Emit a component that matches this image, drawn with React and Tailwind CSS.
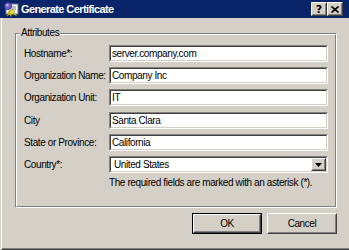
import React from "react";

function Sunken({ children, className = "" }) {
  return (
    <div className={"h-[17px] border border-t-[#808080] border-l-[#808080] border-b-white border-r-white " + className}>
      <div className="h-full border border-t-[#404040] border-l-[#404040] border-b-[#d4d0c8] border-r-[#d4d0c8] bg-white flex items-center">
        {children}
      </div>
    </div>
  );
}

function Raised({ children, className = "" }) {
  return (
    <div className={"border border-t-white border-l-white border-b-[#404040] border-r-[#404040] " + className}>
      <div className="w-full h-full border border-t-[#d4d0c8] border-l-[#d4d0c8] border-b-[#808080] border-r-[#808080] bg-[#d4d0c8] flex items-center justify-center">
        {children}
      </div>
    </div>
  );
}

function CertIcon() {
  return (
    <svg width="16" height="16" viewBox="0 0 16 16" className="shrink-0">
      <rect x="3" y="3" width="12" height="10" fill="#f4f4f4" stroke="#7a7a7a" strokeWidth="1" />
      <line x1="8" y1="6" x2="13" y2="6" stroke="#8a8a8a" />
      <line x1="8" y1="8" x2="13" y2="8" stroke="#8a8a8a" />
      <circle cx="5" cy="5" r="3.6" fill="#6a5acd" stroke="#3a2a8a" strokeWidth="0.8" />
      <circle cx="4.3" cy="4.2" r="1.3" fill="#b8b0f0" />
      <path d="M6 10 L4 15 L6.5 13.5 L8 15.5 L9 11 Z" fill="#d8c820" stroke="#8a8010" strokeWidth="0.6" />
      <circle cx="9" cy="11" r="2.4" fill="#e8e040" stroke="#9a9010" strokeWidth="0.7" />
      <path d="M12 12 L14 15 L11 14 Z" fill="#a0c030" />
    </svg>
  );
}

const rows = [
  ["Hostname*:", "server.company.com", "mt-0"],
  ["Organization Name:", "Company Inc", "mt-[5px]"],
  ["Organization Unit:", "IT", "mt-[5px]"],
  ["City", "Santa Clara", "mt-[6px]"],
  ["State or Province:", "California", "mt-[5px]"],
];

export default function App() {
  return (
    <div className="w-[349px] h-[250px] bg-[#d4d0c8] flex flex-col overflow-hidden font-['Liberation_Sans',Arial,sans-serif] text-black text-[10px] tracking-[-0.4px]">
      <div className="h-[18px] shrink-0 bg-[#0a246a] flex items-center pl-[3px] pr-[6px]">
        <CertIcon />
        <span className="ml-[2px] text-white font-bold text-[11px] tracking-[-0.6px] leading-none">Generate Certificate</span>
        <div className="ml-auto flex">
          <Raised className="w-[16px] h-[14px]">
            <span className="font-bold text-[11px] leading-none tracking-normal font-['DejaVu_Sans',sans-serif]">?</span>
          </Raised>
          <Raised className="w-[16px] h-[14px]">
            <svg width="8" height="7" viewBox="0 0 8 7">
              <path d="M0.5 0.5 L7.5 6.5 M7.5 0.5 L0.5 6.5" stroke="#000" strokeWidth="1.6" />
            </svg>
          </Raised>
        </div>
      </div>
      <div className="flex-1 ml-px border-l border-l-white border-b border-b-[#404040]">
        <div className="h-full border-b border-b-[#808080] pl-[13px] pr-[12px] pt-[15px] flex flex-col">
          <div className="relative h-[175px] border border-t-[#808080] border-l-[#808080] border-b-white border-r-white">
            <span className="absolute left-[4px] top-[-7px] bg-[#d4d0c8] px-px leading-[12px]">Attributes</span>
            <div className="h-full border border-t-white border-l-white border-b-[#808080] border-r-[#808080] pl-[7px] pr-[7px] pt-[10px] flex flex-col">
              {rows.map(([label, value, mt]) => (
                <div key={label} className={"flex items-center " + mt}>
                  <span className="w-[85px] shrink-0 leading-[12px]">{label}</span>
                  <Sunken className="w-[219px]">
                    <span className="pl-px leading-[12px]">{value}</span>
                  </Sunken>
                </div>
              ))}
              <div className="flex items-center mt-[5px]">
                <span className="w-[85px] shrink-0 leading-[12px]">Country*:</span>
                <Sunken className="w-[219px]">
                  <span className="pl-[3px] leading-[12px] flex-1">United States</span>
                  <Raised className="w-[15px] h-full">
                    <svg width="7" height="4" viewBox="0 0 7 4">
                      <path d="M0 0 H7 L3.5 4 Z" fill="#000" />
                    </svg>
                  </Raised>
                </Sunken>
              </div>
              <div className="pl-[85px] mt-[4px] leading-[12px]">
                The required fields are marked with an asterisk (*).
              </div>
            </div>
          </div>
          <div className="flex justify-end gap-[5px] mt-[5px]">
            <div className="w-[70px] h-[21px] border border-black">
              <Raised className="w-full h-full">OK</Raised>
            </div>
            <Raised className="w-[70px] h-[21px]">Cancel</Raised>
          </div>
        </div>
      </div>
    </div>
  );
}
